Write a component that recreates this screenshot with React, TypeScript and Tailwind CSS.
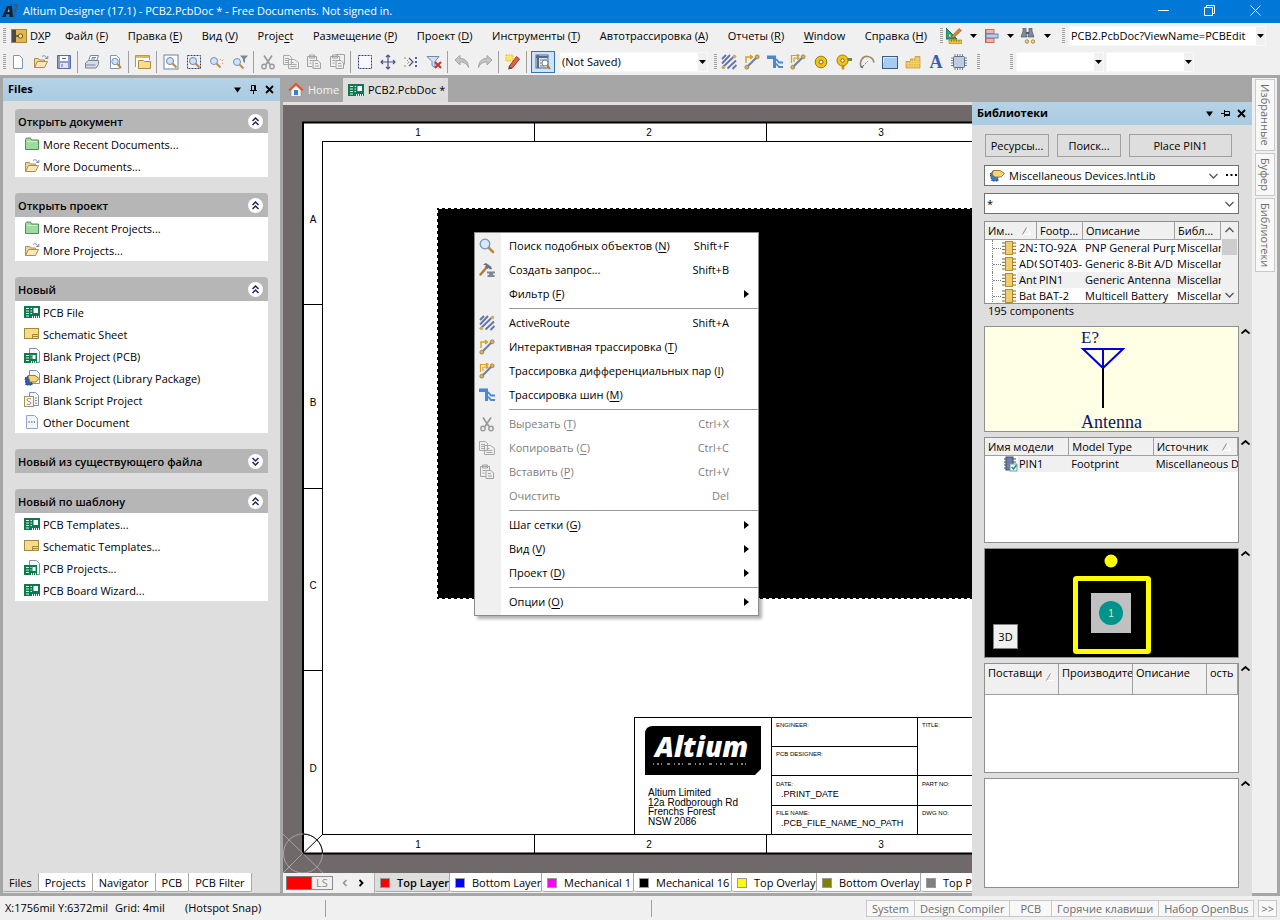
import { useState, type ReactNode } from 'react'

const sheet = <path d="M3.5 1.5h6l3 3v10h-9z" fill="#fff" stroke="#7f93b5" />
const lens = (
  <>
    <path d="M9.5 9.5l4.500 4.500" stroke="#c08a45" strokeWidth="2.600" strokeLinecap="round" />
    <circle cx="6" cy="6" r="4.800" fill="#d6e8fa" stroke="#7890b4" strokeWidth="1.300" />
  </>
)
const board = (
  <>
    <rect x="0" y="2" width="16" height="12" fill="#0c7a4e" />
    <path d="M2 4.500h3M2 7h3M2 9.500h3M2 12h3M6.500 4.500h1.500M6.500 7h1.500M6.500 9.500h1.500" stroke="#d8f5e4" />
    <rect x="9.500" y="4" width="4.500" height="5" fill="#fff" />
    <path d="M8.500 14v-2M10.500 14v-2M12.500 14v-2M14.500 14v-2" stroke="#fff" />
  </>
)
const routeEnds = (
  <>
    <path d="M3 13L13 3" stroke="#7280a8" strokeWidth="2.200" />
    <circle cx="2.800" cy="13.200" r="2" fill="#cbb060" stroke="#8a7638" strokeWidth=".6" />
    <circle cx="13.200" cy="2.800" r="2" fill="#cbb060" stroke="#8a7638" strokeWidth=".6" />
  </>
)
const clipPage = (
  <path d="M1.500 2.500h9v4M1.500 2.500v10h5M3.500 1h5v3h-5zM3.500 6.500h3M3.500 9h2M7 6.500h5l2.500 2.500v5.500H7zM9 9.500h3M9 12h4" />
)

const icons: Record<string, ReactNode> = {
  altium: (
    <>
      <path d="M0 14L5 3h5l1 11H7.500l-.3-3H4.500l-1 3z" fill="#17202e" />
      <path d="M5.500 9l1.500-4 .5 4z" fill="#8fb4dc" />
      <path d="M8 2h2M11.500 2H15l-2.500 8M12.500 12l-1 2" stroke="#4b4f5c" strokeWidth="1.500" fill="none" />
    </>
  ),
  dxp: (
    <>
      <rect x=".5" y="1.500" width="15" height="13" fill="#e2b84a" stroke="#a88532" />
      <rect x="1" y="2" width="4" height="12" fill="#4a4a4a" />
      <path d="M4 8h5" stroke="#4a4a4a" strokeWidth="1.500" />
      <circle cx="9.500" cy="8" r="2.200" fill="#f5dc90" stroke="#6a5320" />
    </>
  ),
  page: sheet,
  open: (
    <>
      <path d="M1.500 13.500v-9h4l1 1.500h5v2" fill="#f0d79b" stroke="#b08c48" />
      <path d="M1.500 13.500l3-6h10l-3 6z" fill="#fae8bc" stroke="#b08c48" />
      <path d="M9 2.500c2-1.500 4-.5 4.500 1.500M14.800 2v2.500h-2.500" fill="none" stroke="#6d83b8" />
    </>
  ),
  save: (
    <>
      <path d="M1.500 1.500h13v13h-13z" fill="#8d9ccc" stroke="#5b6ba5" />
      <rect x="4" y="2" width="8" height="5" fill="#fff" />
      <rect x="4" y="9" width="8" height="5" fill="#dfe5f4" />
      <path d="M6 4.500h4M6 10v3" stroke="#5b6ba5" />
    </>
  ),
  print: (
    <>
      <path d="M4.500 7l2-5.500h8L12.500 7" fill="#fff" stroke="#76829e" />
      <path d="M1.500 9l3-2.500h10v4l-2.500 3.500h-10.500z" fill="#d8dce6" stroke="#76829e" />
      <path d="M2 11h9.500M8 3.500h4M7 5h4" stroke="#76829e" />
    </>
  ),
  preview: (
    <>
      {sheet}
      <circle cx="8" cy="7.500" r="3.200" fill="#cfe4fa" stroke="#7890b4" />
      <path d="M10.500 10l3.500 4" stroke="#c08a45" strokeWidth="2" />
    </>
  ),
  folderWin: (
    <>
      <path d="M.5 13V1.500h14V6" fill="#fff" stroke="#b59a4c" />
      <path d="M1 3h13" stroke="#d9bb59" strokeWidth="2" />
      <path d="M3.500 14.500v-8h5l1 1h6v7z" fill="#f7dd88" stroke="#b08c38" />
    </>
  ),
  zoomDoc: (
    <>
      <rect x="1" y="1" width="14" height="14" fill="#fff" stroke="#6d83a8" />
      <circle cx="7" cy="7" r="3.500" fill="#cfe4fa" stroke="#6d83a8" />
      <path d="M9.500 9.500l4 4" stroke="#c08a45" strokeWidth="2.200" />
    </>
  ),
  zoomArea: (
    <>
      <rect x="1.500" y="1.500" width="13" height="13" fill="none" stroke="#33407a" strokeDasharray="2 1" />
      <circle cx="7" cy="7" r="3.500" fill="#cfe4fa" stroke="#6d83a8" />
      <path d="M9.500 9.500l4 4" stroke="#c08a45" strokeWidth="2.200" />
    </>
  ),
  zoomSel: (
    <>
      <circle cx="5" cy="7" r="3.500" fill="#cfe4fa" stroke="#7890b4" />
      <path d="M7.500 9.500l4 4" stroke="#c08a45" strokeWidth="2" />
      <path d="M11 5l2 2 2-2M13 9l2 1" fill="none" stroke="#d0a640" strokeDasharray="1.500 1" />
    </>
  ),
  zoomFilter: (
    <>
      <circle cx="5" cy="8" r="3.500" fill="#cfe4fa" stroke="#7890b4" />
      <path d="M7.500 10.500l4 4" stroke="#c08a45" strokeWidth="2" />
      <path d="M8 1.500h8l-3 3.500v4l-2-1.500V5z" fill="#7d8794" />
    </>
  ),
  cut: (
    <>
      <path d="M4 1.500l6 9M12 1.500l-6 9" stroke="#9a9a9a" strokeWidth="1.700" />
      <circle cx="4" cy="12.500" r="2.200" fill="none" stroke="#9a9a9a" strokeWidth="1.400" />
      <circle cx="12" cy="12.500" r="2.200" fill="none" stroke="#9a9a9a" strokeWidth="1.400" />
    </>
  ),
  copy: (
    <path
      d="M.5 1.500h6l2 2v7h-8zM2 4.500h4M2 6.500h4M2 8.500h3M5.500 5.500h6l4 3v6h-10zM7.500 8.500h3M7.500 10.500h6M7.500 12.500h6"
      fill="#efefef"
      stroke="#a8a8a8"
    />
  ),
  paste: <g fill="#efefef" stroke="#a2a2a2">{clipPage}</g>,
  pasteMany: (
    <g fill="#efefef" stroke="#a2a2a2">
      <path d="M6.500 .5h9v10" />
      {clipPage}
    </g>
  ),
  marquee: <rect x="1.500" y="1.500" width="13" height="13" fill="#f8f8ff" stroke="#33407a" strokeDasharray="2 1" />,
  move: (
    <path
      d="M8 1v14M1 8h14M6 3l2-2 2 2M6 13l2 2 2-2M3 6L1 8l2 2M13 6l2 2-2 2"
      fill="none"
      stroke="#46568a"
      strokeWidth="1.200"
    />
  ),
  deselect: (
    <>
      <path d="M1 4h3M4 6l2 2-2 2M1 12h3" fill="none" stroke="#a08c50" strokeDasharray="2 1" />
      <path d="M6 4l4 4-4 4" fill="none" stroke="#46568a" strokeWidth="1.200" />
      <path d="M12 3h2v2h-2zM12 7h2v2h-2zM12 11h2v2h-2z" fill="#56648c" />
    </>
  ),
  clearFilter: (
    <>
      <path d="M1 2.500h12L9 7.500v6l-3-2v-4z" fill="#cfe0f2" stroke="#6d8bb4" />
      <path d="M9 8l6 6M15 8l-6 6" stroke="#d03030" strokeWidth="2" />
    </>
  ),
  undo: <path d="M1 6l5-4.500v3c5 0 8 2.500 8.500 9C13 9.500 10 8 6 8v3z" fill="#c4c4c4" stroke="#a4a4a4" />,
  redo: <path d="M15 6l-5-4.500v3c-5 0-8 2.500-8.500 9C3 9.500 6 8 10 8v3z" fill="#c4c4c4" stroke="#a4a4a4" />,
  pencil: (
    <>
      <path d="M1 1h7v6H1z" fill="#ffe76a" stroke="#e0b820" strokeDasharray="1.500 1" />
      <path d="M4 12.500L11.500 2.500l3 2.500-7.500 9.500z" fill="#e0604c" stroke="#a03c30" />
      <path d="M4 12.500l-1 3 4-1z" fill="#404040" />
    </>
  ),
  inspect: (
    <>
      <rect x="1" y="1" width="12" height="13" fill="#f2e0b8" stroke="#4a6c98" />
      <path d="M1 3h12M3 1v13" stroke="#4a6c98" strokeWidth="2" />
      <path d="M5 6h7M5 9h4M5 12h4" stroke="#6d8bb4" />
      <circle cx="10" cy="9" r="3" fill="#fff" stroke="#6d83a8" />
      <path d="M12 11l3 4" stroke="#b07830" strokeWidth="2" />
    </>
  ),
  active: (
    <>
      <path d="M1 5l4-4M1 9.500L9 1M1 14L14 1.500M6.500 14.500l8.500-8M11.500 15l4-4" stroke="#6474a8" strokeWidth="1.900" />
      <circle cx="2.500" cy="13.500" r="1.800" fill="#cbb060" />
      <circle cx="13.500" cy="2.500" r="1.800" fill="#cbb060" />
    </>
  ),
  route: (
    <>
      {routeEnds}
      <path d="M2 9V3h6M6 1l2.500 2L6 5" fill="none" stroke="#d6a21c" strokeWidth="1.400" />
    </>
  ),
  diff: (
    <>
      {routeEnds}
      <path d="M1.500 9V1.500H8M4 8V4h4M7 0l2 1.500L7 3M7 2.500L9 4 7 5.500" fill="none" stroke="#d6a21c" strokeWidth="1.200" />
    </>
  ),
  bus: (
    <>
      <path d="M0 1.500h9V14H6V5H0z" fill="#4a86d4" />
      <path d="M9 5l3 3.500h4M9 9.500l3 3.500h4" fill="none" stroke="#4a86d4" strokeWidth="1.800" />
    </>
  ),
  pad: (
    <>
      <circle cx="8" cy="8" r="5.800" fill="#f2c21a" stroke="#a07c10" />
      <circle cx="8" cy="8" r="2" fill="#fff" stroke="#806410" />
    </>
  ),
  via: (
    <>
      <path d="M7 9v6.500" stroke="#d68a20" strokeWidth="2.600" />
      <path d="M10 5.500h6" stroke="#4c9a20" strokeWidth="3" />
      <circle cx="6.500" cy="6.500" r="5.500" fill="#f2c21a" stroke="#a07c10" />
      <circle cx="6.500" cy="6.500" r="1.700" fill="#fff" stroke="#806410" />
    </>
  ),
  arc: (
    <>
      <path d="M2 13C0 7 4 2 8.500 2.500c4 .5 6 3 6.500 6" fill="none" stroke="#a08a68" strokeWidth="1.700" />
      <path d="M4 12l5-5" stroke="#5b74c4" strokeDasharray="1.500 1" />
      <circle cx="3" cy="13" r="1.300" fill="#5b74c4" />
    </>
  ),
  fill: (
    <>
      <rect x=".5" y="2.500" width="15" height="12" fill="#a6cdf0" stroke="#365c88" />
      <path d="M1.500 9V3.500h13" fill="none" stroke="#dceefc" />
    </>
  ),
  polygon: (
    <>
      <path d="M1 7.500h4.500V5H10V2.500h5V14H1z" fill="#e8b93c" stroke="#c0942c" strokeWidth=".7" />
      <path d="M1 9.500h14M1 12h14M6 7.500h9M10 5h5M3.500 8v6M6 6v8M8.500 5v9M11 3v11M13 3v11" stroke="#f6dc8c" strokeWidth=".6" />
    </>
  ),
  text: (
    <text x="8" y="14" fontSize="18" fontWeight="700" textAnchor="middle" fill="#3c5cae" fontFamily="Liberation Serif, serif">
      A
    </text>
  ),
  chip: (
    <>
      <path d="M4 0v16M6.500 0v16M9 0v16M11.500 0v16M0 4h16M0 6.500h16M0 9h16M0 11.500h16" stroke="#6b7d94" strokeWidth=".9" />
      <rect x="2.500" y="2.500" width="11" height="11" rx="1" fill="#bccde0" stroke="#5f7189" />
    </>
  ),
  ruler: (
    <>
      <path d="M0 0v11h11z" fill="#33a070" stroke="#1d6f4c" />
      <path d="M3 6v2.500h2.500z" fill="#fff" />
      <path d="M5 9l8-8.500 2.500 2L8 9.500z" fill="#d8843a" stroke="#94551e" strokeWidth=".6" />
      <path d="M3 12h12.500v3.500H3z" fill="#f2c83c" stroke="#a88218" strokeWidth=".7" />
      <path d="M5.500 12v2M8 12v2M10.500 12v2M13 12v2" stroke="#8a6a10" strokeWidth=".7" />
    </>
  ),
  align: (
    <>
      <path d="M2.500 1v14" stroke="#5a6a94" />
      <rect x="3" y="1.500" width="8" height="4" fill="#f3b4ac" stroke="#d06c60" />
      <rect x="3" y="6" width="12" height="4" fill="#b4d0f0" stroke="#5c86b8" />
      <rect x="3" y="10.500" width="8" height="4" fill="#f3b4ac" stroke="#d06c60" />
    </>
  ),
  find: (
    <>
      <path d="M3 0h3v3l1 6H1l2-6zM9 0h3v3l2 6H8l1-6z" fill="#7f8a9c" stroke="#505a6c" strokeWidth=".7" />
      <path d="M6 5h3" stroke="#505a6c" strokeWidth="2" />
      <circle cx="7" cy="13.500" r="1.700" fill="#f0d890" stroke="#a88a38" />
      <circle cx="13" cy="13.500" r="1.700" fill="#f0d890" stroke="#a88a38" />
    </>
  ),
  home: (
    <>
      <path d="M3 8v6.500h10V8L8 3.500z" fill="#f6f4ee" stroke="#9a9484" strokeWidth=".7" />
      <path d="M1 8.500L8 2l7 6.500" fill="none" stroke="#dd5a2c" strokeWidth="2.200" />
      <rect x="6" y="8" width="4" height="5" fill="#2f7ee0" />
    </>
  ),
  board,
  green: (
    <>
      <path d="M1.500 13.500v-10l1-1.500h4l1 2h7v9.500z" fill="#9fdb9f" stroke="#4d8f5c" />
      <path d="M3 5.500h10" stroke="#c9f0c9" />
    </>
  ),
  schematic: (
    <>
      <rect x=".5" y="2.500" width="14" height="10" fill="#f5dc86" stroke="#a8893c" />
      <path d="M8.500 12V8.500H14M9 10.500h5" fill="none" stroke="#a8893c" />
    </>
  ),
  boardProject: (
    <>
      <path d="M5.500.5h7l3 3v11h-10z" fill="#f3f7fc" stroke="#7f93b5" />
      <rect x="0" y="5" width="13" height="10" fill="#0c7a4e" />
      <path d="M2 7.500h3M2 10h3M2 12.500h3M6.500 7.500h1M6.500 10h1" stroke="#d8f5e4" />
      <rect x="8.500" y="7" width="3" height="4" fill="#fff" />
      <path d="M7.500 15v-2M9.500 15v-2M11.500 15v-2" stroke="#fff" />
    </>
  ),
  library: (
    <>
      <path d="M5.500.5h7l3 3v10h-10z" fill="#f3f7fc" stroke="#7f93b5" />
      <path d="M1 8l3-2h4v9H2z" fill="#2c5fae" stroke="#1c3f7c" strokeDasharray="1.500 1" />
      <path d="M4 5.500h7l4 3-3 3.500H6z" fill="#f5d77a" stroke="#9a7c30" />
    </>
  ),
  script: (
    <>
      <path d="M5.500.5h6l3 3v10h-9z" fill="#f3f7fc" stroke="#7f93b5" />
      <rect x=".5" y="4.500" width="9" height="10" fill="#fbf6e4" stroke="#a39458" />
      <path d="M7 7C5 6 3 6.500 3 8s4 1.500 4 3-2.500 2-4 1M11 6h2M11 8.500h2M11 11h2" fill="none" stroke="#8b8b8b" />
    </>
  ),
  other: (
    <>
      <path d="M2.500 1.500h8l3 3v10h-11z" fill="#f3f7fc" stroke="#8fa5cc" />
      <path d="M4.500 8h7" stroke="#5b7ab0" strokeWidth="1.300" strokeDasharray="1.300 1.300" />
    </>
  ),
  intlib: (
    <>
      <path d="M1 6l3-3h5v10H3z" fill="#3f78c4" stroke="#1c4f94" strokeDasharray="1.500 1" />
      <path d="M4 2.500h7l4.500 3L12 9H6L3.500 7z" fill="#f5d77a" stroke="#9a7c30" />
    </>
  ),
  part: (
    <>
      <path d="M1 3h14M1 6.300h14M1 9.600h14M1 13h14" stroke="#7a6428" />
      <rect x="4.500" y="1.500" width="7" height="13" fill="#f0cd6c" stroke="#b08a30" />
    </>
  ),
  footprint: (
    <>
      <path d="M2 3h12M2 6h12M2 9h12M2 12h9" stroke="#3c4a68" />
      <rect x="4" y="1" width="7" height="13" fill="#6f80a4" stroke="#3c4a68" />
      <rect x="8" y="8" width="7" height="7" fill="#fff" stroke="#6c9c94" />
      <path d="M9.500 11l2 2 3-4" fill="none" stroke="#1c9484" strokeWidth="1.500" />
    </>
  ),
  lens,
  hammer: (
    <>
      <path d="M1.500 12.500L8 5" stroke="#b5763c" strokeWidth="2.400" strokeLinecap="round" />
      <path d="M4 2.500L7 1l5 3.500 1 2.500-2 .5L9.500 6 8 7 6 5l1-1.500z" fill="#6c7480" />
      <path d="M8 9.500h8v2h-2v1.500h1.500V15h-7v-2H10v-1.500H8z" fill="#7d8796" />
    </>
  ),
}

function Icon({ name }: { name: string }) {
  return (
    <svg viewBox="0 0 16 16" className="size-4 shrink-0" fill="none" aria-hidden="true">
      {icons[name]}
    </svg>
  )
}

// The letter after an underscore is the keyboard mnemonic.
function Label({ text }: { text: string }) {
  const at = text.indexOf('_')
  if (at < 0) return <>{text}</>
  return (
    <>
      {text.slice(0, at)}
      <span className="underline underline-offset-2">{text[at + 1]}</span>
      {text.slice(at + 2)}
    </>
  )
}

function Down() {
  return (
    <svg viewBox="0 0 7 4" className="w-[7px] h-1 shrink-0" aria-hidden="true">
      <path d="M0 0h7L3.500 4z" />
    </svg>
  )
}

function Grip() {
  return <span className="w-[3px] h-4 shrink-0 bg-[repeating-linear-gradient(#a0a0a0_0_1px,transparent_1px_2px)]" />
}

function Sep() {
  return <span className="w-[5px] shrink-0 flex justify-center"><span className="w-px h-[22px] bg-[#a0a0a0]" /></span>
}

function Tools({ names }: { names: string[] }) {
  return names.map((n) => (
    <button key={n} aria-label={n} className="w-[23px] h-[22px] flex items-center justify-center hover:bg-[#d5e6f5]">
      <Icon name={n} />
    </button>
  ))
}

function ToolCombo({ label, value, width }: { label: string; value: string; width: string }) {
  return (
    <div className={`${width} h-5 flex bg-white border border-[#f8f8f8]`}>
      <select aria-label={label} className="appearance-none flex-1 min-w-0 pl-px bg-white outline-none">
        <option>{value}</option>
      </select>
      <span className="w-[9px] bg-[#f0f0f0] flex items-center justify-center"><Down /></span>
    </div>
  )
}

const menus = [
  'Файл (_F)', 'Правка (_E)', 'Вид (_V)', 'Proje_ct', 'Размещение (_P)', 'Проект (_D)',
  'Инструменты (_T)', 'Автотрассировка (_A)', 'Отчеты (_R)', '_Window', 'Справка (_H)',
]

const toolGroups = [
  ['page', 'open', 'save'],
  ['print', 'preview'],
  ['folderWin'],
  ['zoomDoc', 'zoomArea', 'zoomSel', 'zoomFilter'],
  ['cut', 'copy', 'paste', 'pasteMany'],
  ['marquee', 'move', 'deselect', 'clearFilter'],
  ['undo', 'redo'],
  ['pencil'],
]

const placeTools = ['active', 'route', 'bus', 'diff', 'pad', 'via', 'arc', 'fill', 'polygon', 'text', 'chip']

const groups: { title: string; closed?: boolean; items: [string, string][] }[] = [
  { title: 'Открыть документ', items: [['green', 'More Recent Documents...'], ['open', 'More Documents...']] },
  { title: 'Открыть проект', items: [['green', 'More Recent Projects...'], ['open', 'More Projects...']] },
  {
    title: 'Новый',
    items: [
      ['board', 'PCB File'],
      ['schematic', 'Schematic Sheet'],
      ['boardProject', 'Blank Project (PCB)'],
      ['library', 'Blank Project (Library Package)'],
      ['script', 'Blank Script Project'],
      ['other', 'Other Document'],
    ],
  },
  { title: 'Новый из существующего файла', closed: true, items: [] },
  {
    title: 'Новый по шаблону',
    items: [
      ['board', 'PCB Templates...'],
      ['schematic', 'Schematic Templates...'],
      ['boardProject', 'PCB Projects...'],
      ['board', 'PCB Board Wizard...'],
    ],
  },
]

type Entry = { label: string; icon?: string; keys?: string; sub?: boolean; off?: boolean }

const contextMenu: Entry[][] = [
  [
    { label: 'Поиск подобных объектов (_N)', icon: 'lens', keys: 'Shift+F' },
    { label: 'Создать запрос...', icon: 'hammer', keys: 'Shift+B' },
    { label: 'Фильтр (_F)', sub: true },
  ],
  [
    { label: 'ActiveRoute', icon: 'active', keys: 'Shift+A' },
    { label: 'Интерактивная трассировка (_T)', icon: 'route' },
    { label: 'Трассировка дифференциальных пар (_I)', icon: 'diff' },
    { label: 'Трассировка шин (_M)', icon: 'bus' },
  ],
  [
    { label: 'Вырезать (_T)', icon: 'cut', keys: 'Ctrl+X', off: true },
    { label: 'Копировать (_C)', icon: 'copy', keys: 'Ctrl+C', off: true },
    { label: 'Вставить (_P)', icon: 'paste', keys: 'Ctrl+V', off: true },
    { label: 'Очистить', keys: 'Del', off: true },
  ],
  [
    { label: 'Шаг сетки (_G)', sub: true },
    { label: 'Вид (_V)', sub: true },
    { label: 'Проект (_D)', sub: true },
  ],
  [{ label: 'Опции (_O)', sub: true }],
]

const layers = [
  { name: 'Top Layer', color: 'bg-[#ff0000]', width: 'w-[75px]' },
  { name: 'Bottom Layer', color: 'bg-[#0000ff]', width: 'w-[92px]' },
  { name: 'Mechanical 1', color: 'bg-[#ff00ff]', width: 'w-[92px]' },
  { name: 'Mechanical 16', color: 'bg-black', width: 'w-[98px]' },
  { name: 'Top Overlay', color: 'bg-[#ffff00]', width: 'w-[85px]' },
  { name: 'Bottom Overlay', color: 'bg-[#808000]', width: 'w-[104px]' },
  { name: 'Top Paste', color: 'bg-[#808080]', width: 'w-[84px]' },
]

function TitleBar() {
  return (
    <header className="h-[23px] shrink-0 flex items-center bg-[#0078d7] text-white pl-[2px] pb-[2px]">
      <Icon name="altium" />
      <h1 className="pl-[5px] flex-1">Altium Designer (17.1) - PCB2.PcbDoc * - Free Documents. Not signed in.</h1>
      <div className="flex pr-[2px]">
        <button aria-label="Minimize" className="w-[46px] h-[21px] flex items-center justify-center">
          <svg viewBox="0 0 11 11" className="size-[11px]" fill="none" stroke="#fff"><path d="M0 5.500h11" /></svg>
        </button>
        <button aria-label="Restore" className="w-[46px] h-[21px] flex items-center justify-center">
          <svg viewBox="0 0 11 11" className="size-[11px]" fill="none" stroke="#fff"><path d="M.5 2.500h8v8h-8zM2.500 2.500v-2h8v8h-2" /></svg>
        </button>
        <button aria-label="Close" className="w-[46px] h-[21px] flex items-center justify-center">
          <svg viewBox="0 0 11 11" className="size-[11px]" fill="none" stroke="#fff"><path d="M.5.5l10 10M10.500.5l-10 10" /></svg>
        </button>
      </div>
    </header>
  )
}

function MenuBar() {
  return (
    <div className="h-[26px] shrink-0 flex items-center pl-[3px]">
      <Grip />
      <span className="pl-[5px] pr-[3px]"><Icon name="dxp" /></span>
      <nav className="flex whitespace-nowrap">
        <button className="w-[35px] text-left"><Label text="D_XP" /></button>
        <div className="w-[862px] flex justify-between">
          {menus.map((m) => (
            <button key={m}><Label text={m} /></button>
          ))}
        </div>
      </nav>
      <span className="w-[13px]" />
      <Grip />
      {['ruler', 'align', 'find'].map((n) => (
        <button key={n} aria-label={n} className="w-[37px] pl-[3px] flex items-center gap-2">
          <Icon name={n} />
          <Down />
        </button>
      ))}
      <span className="w-2" />
      <Grip />
      <span className="w-1" />
      <ToolCombo label="Address" value="PCB2.PcbDoc?ViewName=PCBEdit" width="w-[197px]" />
    </div>
  )
}

function ToolBar() {
  return (
    <div className="h-[26px] shrink-0 flex items-center pl-[3px]">
      <Grip />
      {toolGroups.map((g) => (
        <div key={g[0]} className="flex items-center">
          <Tools names={g} />
          <Sep />
        </div>
      ))}
      <button aria-label="inspect" className="w-6 h-[22px] mx-[2px] flex items-center justify-center bg-[#cfe3f5] border border-[#2f76b8]">
        <Icon name="inspect" />
      </button>
      <span className="w-[3px]" />
      <ToolCombo label="Filter" value="(Not Saved)" width="w-[148px]" />
      <span className="w-[6px]" />
      <Grip />
      <Tools names={placeTools} />
      <span className="w-[7px]" />
      <Grip />
      <span className="w-[30px]" />
      <Grip />
      <span className="w-[3px]" />
      <ToolCombo label="Variant" value="" width="w-[88px]" />
      <span className="w-[2px]" />
      <ToolCombo label="View state" value="" width="w-[88px]" />
    </div>
  )
}

function PanelTitle({ title, pinned }: { title: string; pinned?: boolean }) {
  return (
    <div className="h-[23px] shrink-0 flex items-center bg-linear-to-b from-[#b6d2e6] to-[#a9cbe1] pl-[5px] pr-[6px] pb-[2px]">
      <h2 className="flex-1 font-bold">{title}</h2>
      <div className="flex items-center gap-[7px] pt-px">
        <button aria-label={`${title} menu`}>
          <svg viewBox="0 0 9 9" className="size-[9px]"><path d="M1 2.500h7l-3.500 5z" /></svg>
        </button>
        <button aria-label={`Pin ${title}`}>
          <svg viewBox="0 0 9 9" className={pinned ? 'size-[9px] rotate-90' : 'size-[9px]'} fill="none" stroke="#000">
            <path d="M2.500.5h4v5h-4zM1 5.500h7M4.500 6v3M5.500 1v4" />
          </svg>
        </button>
        <button aria-label={`Close ${title}`}>
          <svg viewBox="0 0 9 9" className="size-[9px]" stroke="#000" strokeWidth="1.800"><path d="M1 1l7 7M8 1L1 8" /></svg>
        </button>
      </div>
    </div>
  )
}

function FilesPanel() {
  return (
    <aside className="w-[277px] shrink-0 flex flex-col bg-[#dedede]">
      <PanelTitle title="Files" />
      <div className="flex-1 flex flex-col gap-4 px-3 pt-2">
        {groups.map((g) => (
          <section key={g.title} className="bg-white rounded-t-[3px]">
            <h3 className="h-6 flex items-center justify-between bg-[#b6b6b6] rounded-t-[3px] pl-[3px] pr-[5px] font-semibold">
              <span className="pt-[2px]">{g.title}</span>
              <button aria-label={g.title} className="size-[15px] rounded-full bg-white flex items-center justify-center">
                <svg viewBox="0 0 9 9" className={g.closed ? 'size-[9px] rotate-180' : 'size-[9px]'} fill="none" stroke="#1f2c50" strokeWidth="1.500">
                  <path d="M1.500 4l3-3 3 3M1.500 8l3-3 3 3" />
                </svg>
              </button>
            </h3>
            <ul>
              {g.items.map(([icon, text]) => (
                <li key={text} className="h-[22px] pl-[9px] flex items-center">
                  <a href="#" className="flex items-center gap-[3px]"><Icon name={icon} /><span className="pt-[2px]">{text}</span></a>
                </li>
              ))}
            </ul>
          </section>
        ))}
      </div>
      <div className="h-[20px] flex">
        {['Files', 'Projects', 'Navigator', 'PCB', 'PCB Filter'].map((t, i) => (
          <button
            key={t}
            className={`h-[19px] px-[6px] pt-px border-r border-b border-[#a8a8a8] rounded-b-[2px] ${i === 0 ? '' : 'bg-white'}`}
          >
            {t}
          </button>
        ))}
      </div>
    </aside>
  )
}

function Sheet() {
  return (
    <svg
      viewBox="283 105 689 768"
      preserveAspectRatio="xMinYMin slice"
      className="w-full h-full block"
      fill="none"
      fontFamily="Liberation Sans, sans-serif"
    >
      <rect x="303" y="122" width="700" height="732" fill="#fff" />
      <path d="M1000 122.500H303V853.500H1000" stroke="#000" strokeWidth="2" />
      <g stroke="#000" shapeRendering="crispEdges">
        <path d="M1000 141.500H322.500V834.500H1000" />
        <path d="M534.500 122v19M766.500 122v19M534.500 834v19M766.500 834v19" />
        <path d="M303 304.500h19M303 488.500h19M303 670.500h19" />
        <path d="M634.500 834V717.500H1000M771.500 717v117M917.500 717v117M771 746.500h146M771 775.500h229M771 805.500h229" />
      </g>
      <g fill="#000" fontSize="10" textAnchor="middle">
        <text x="418" y="136">1</text>
        <text x="649" y="136">2</text>
        <text x="881" y="136">3</text>
        <text x="418" y="848">1</text>
        <text x="649" y="848">2</text>
        <text x="881" y="848">3</text>
        <text x="313" y="223">A</text>
        <text x="313" y="406">B</text>
        <text x="313" y="589">C</text>
        <text x="313" y="772">D</text>
      </g>
      <rect x="437" y="208" width="600" height="391" fill="#000" />
      <path d="M1000 208.500H437.500V598.500H1000" stroke="#fff" strokeDasharray="3 3" shapeRendering="crispEdges" />
      <path d="M653 726h108v43l-6 6H645v-41q0-8 8-8z" fill="#000" />
      <text x="655" y="757" fontSize="28" fontWeight="800" fontStyle="italic" fill="#fff" fontFamily="Open Sans, sans-serif">
        Altium
      </text>
      <path d="M653 764h94" stroke="#fff" strokeDasharray="1 3 2 2 1 5 3 4" />
      <g fill="#000" fontSize="10">
        <text x="648" y="796">Altium Limited</text>
        <text x="648" y="806">12a Rodborough Rd</text>
        <text x="648" y="815">Frenchs Forest</text>
        <text x="648" y="825">NSW 2086</text>
      </g>
      <g fill="#000" fontSize="9">
        <text x="781" y="797">.PRINT_DATE</text>
        <text x="781" y="826">.PCB_FILE_NAME_NO_PATH</text>
      </g>
      <g fill="#000" fontSize="6">
        <text x="776" y="727">ENGINEER:</text>
        <text x="776" y="756">PCB DESIGNER:</text>
        <text x="776" y="786">DATE:</text>
        <text x="776" y="815">FILE NAME:</text>
        <text x="922" y="727">TITLE:</text>
        <text x="922" y="786">PART NO:</text>
        <text x="922" y="815">DWG NO:</text>
      </g>
      <circle cx="303" cy="853.500" r="19.500" stroke="#a8a4a3" />
      <path d="M283 834l40 39M283 873l20-20" stroke="#a8a4a3" />
      <path d="M303 853.500l20-19.500M303 834a19.500 19.500 0 0 1 19.500 19.500" stroke="#000" />
    </svg>
  )
}

function ContextMenu() {
  return (
    <div
      role="menu"
      className="absolute left-[191px] top-[127px] w-[285px] py-px border border-[#8c8c8c] shadow-[3px_3px_3px_rgba(0,0,0,0.3)] bg-[linear-gradient(90deg,#f0f0f0_26px,#fff_26px)]"
    >
      {contextMenu.map((section, i) => (
        <div key={i}>
          {i > 0 && <div className="h-[5px] pl-[34px] pt-[2px]"><div className="h-px bg-[#9a9a9a]" /></div>}
          {section.map((e) => (
            <button
              key={e.label}
              role="menuitem"
              disabled={e.off}
              className={`w-full h-6 pl-1 pr-[9px] flex items-center text-left whitespace-nowrap ${e.off ? 'text-[#808080]' : 'text-black'}`}
            >
              <span className="w-[30px] shrink-0">{e.icon && <Icon name={e.icon} />}</span>
              <span className="flex-1"><Label text={e.label} /></span>
              <span>{e.keys}</span>
              <span className="w-5 shrink-0 flex justify-end">
                {e.sub && <svg viewBox="0 0 5 8" className="w-[5px] h-2"><path d="M0 0l5 4-5 4z" /></svg>}
              </span>
            </button>
          ))}
        </div>
      ))}
    </div>
  )
}

function LayerTabs() {
  const [active, setActive] = useState('Top Layer')
  return (
    <div className="h-5 shrink-0 flex items-start bg-[#f0f0f0] overflow-hidden whitespace-nowrap">
      <div className="w-[92px] h-5 shrink-0 flex items-center pl-[3px] border-r border-[#b0b0b0]">
        <span className="w-[26px] h-[14px] bg-[#ff0000] border border-[#7c7c7c]" />
        <button className="w-[21px] h-[14px] leading-3 border border-l-0 border-[#8c8c8c] text-[#8c8c8c]">LS</button>
        <button aria-label="Previous layer" className="pl-[9px]">
          <svg viewBox="0 0 5 8" className="w-[5px] h-2" fill="none" stroke="#909090" strokeWidth="1.500"><path d="M4.500 1l-3 3 3 3" /></svg>
        </button>
        <button aria-label="Next layer" className="pl-3">
          <svg viewBox="0 0 5 8" className="w-[5px] h-2" fill="none" stroke="#000" strokeWidth="1.800"><path d="M.5 1l3 3-3 3" /></svg>
        </button>
      </div>
      {layers.map((l) => (
        <button
          key={l.name}
          onClick={() => setActive(l.name)}
          className={`${l.width} h-[19px] pt-px shrink-0 pl-[5px] flex items-center gap-[7px] border-r border-b border-[#a8a8a8] rounded-b-[2px] ${
            l.name === active ? 'bg-[#dedede] font-semibold' : 'bg-white'
          }`}
        >
          <span className={`size-[10px] shrink-0 border border-[#9a9a9a] ${l.color}`} />
          {l.name}
        </button>
      ))}
    </div>
  )
}

function Fold({ children }: { children: ReactNode }) {
  return (
    <div className="flex items-start">
      <div className="flex-1 min-w-0">{children}</div>
      <button aria-label="Collapse" className="w-[13px] flex justify-center pt-[3px]">
        <svg viewBox="0 0 9 5" className="w-[9px] h-[5px]" fill="none" stroke="#000" strokeWidth="1.800"><path d="M.5 4.500l4-3.500 4 3.500" /></svg>
      </button>
    </div>
  )
}

function Chevron({ up }: { up?: boolean }) {
  return (
    <svg viewBox="0 0 9 6" className={up ? 'w-[9px] h-[6px] rotate-180' : 'w-[9px] h-[6px]'} fill="none" stroke="#555" strokeWidth="1.300">
      <path d="M.5 1l4 4 4-4" />
    </svg>
  )
}

function SortMark() {
  return (
    <svg viewBox="0 0 9 8" className="w-[9px] h-2 shrink-0" fill="none">
      <path d="M5 .5l3.500 7H.5" stroke="#fff" />
      <path d="M.5 7.500L4.500.5" stroke="#8a8a8a" />
    </svg>
  )
}

const parts = [
  ['2N3', 'TO-92A', 'PNP General Purp', 'Miscellar'],
  ['ADC', 'SOT403-', 'Generic 8-Bit A/D', 'Miscellar'],
  ['Ant', 'PIN1', 'Generic Antenna', 'Miscellar'],
  ['Bat', 'BAT-2', 'Multicell Battery', 'Miscellar'],
]

const th = 'text-left font-normal pl-[3px] pr-0 overflow-hidden border-r border-[#a0a0a0]'

function LibrariesPanel() {
  const [mask, setMask] = useState('*')
  return (
    <aside className="w-[280px] shrink-0 flex flex-col bg-[#dedede] whitespace-nowrap">
      <PanelTitle title="Библиотеки" pinned />
      <div className="pl-3 pt-[9px] flex flex-col">
        <div className="flex gap-2 pl-px pr-5">
          <button className="w-16 h-[23px] pt-px border border-[#a0a0a0]">Ресурсы...</button>
          <button className="w-16 h-[23px] pt-px border border-[#a0a0a0]">Поиск...</button>
          <button className="flex-1 h-[23px] pt-px border border-[#a0a0a0]">Place PIN1</button>
        </div>
        <div className="mt-2 mr-[13px] h-[21px] flex items-center bg-white border border-[#707070] pl-1 pr-px">
          <Icon name="intlib" />
          <select aria-label="Library" className="appearance-none flex-1 min-w-0 pl-1 outline-none">
            <option>Miscellaneous Devices.IntLib</option>
          </select>
          <Chevron />
          <button aria-label="Browse" className="pl-2">
            <svg viewBox="0 0 11 3" className="w-[11px] h-[3px]"><path d="M0 0h2v2H0zM4.500 0h2v2h-2zM9 0h2v2H9z" /></svg>
          </button>
        </div>
        <div className="mt-[7px] mr-[13px] h-[21px] flex items-center bg-white border border-[#707070] pl-[2px] pr-1">
          <input aria-label="Mask" value={mask} onChange={(e) => setMask(e.target.value)} className="flex-1 min-w-0 outline-none" />
          <Chevron />
        </div>
        <div className="mt-[7px] mr-[13px] h-[83px] flex bg-white border border-[#909090] overflow-hidden">
          <table className="flex-1 table-fixed border-separate border-spacing-0 w-[236px]">
            <colgroup>
              <col className="w-[52px]" />
              <col className="w-[46px]" />
              <col className="w-[92px]" />
              <col className="w-[46px]" />
            </colgroup>
            <thead className="bg-[#f0f0f0]">
              <tr className="h-[18px]">
                <th className={`${th} border-b`}><span className="flex items-center gap-[9px]">Им... <SortMark /></span></th>
                <th className={`${th} border-b`}>Footp...</th>
                <th className={`${th} border-b`}>Описание</th>
                <th className={`${th} border-b`}>Библ...</th>
              </tr>
            </thead>
            <tbody>
              {parts.map((p, i) => (
                <tr key={p[0]} className="h-4 leading-4">
                  <td className="p-0 overflow-hidden">
                    <span className="flex items-center pl-[7px]">
                      <span className="w-[9px] h-4 border-l border-dotted border-[#808080] flex items-center shrink-0">
                        <span className="flex-1 border-t border-dotted border-[#808080]" />
                      </span>
                      <Icon name="part" />
                      <span className={`flex-1 min-w-0 overflow-hidden pl-[2px] ${i === 2 ? 'bg-[#f0f0f0]' : ''}`}>{p[0]}</span>
                    </span>
                  </td>
                  {p.slice(1).map((c) => (
                    <td key={c} className={`p-0 pl-[2px] overflow-hidden ${i === 2 ? 'bg-[#f0f0f0]' : ''}`}>{c}</td>
                  ))}
                </tr>
              ))}
            </tbody>
          </table>
          <div className="w-[17px] shrink-0 flex flex-col items-center bg-[#f0f0f0] py-[5px]">
            <Chevron up />
            <span className="w-[15px] h-4 mt-[6px] bg-[#cdcdcd]" />
            <span className="flex-1" />
            <Chevron />
          </div>
        </div>
        <p className="h-[22px] pl-1 leading-[14px]">195 components</p>
        <div className="flex flex-col gap-[5px]">
          <Fold>
            <div className="h-[106px] bg-[#ffffe6] border border-[#909090] flex justify-center pr-[2px]">
              <svg viewBox="0 0 120 104" className="w-[120px] h-[104px]" fill="none" fontFamily="Liberation Serif, serif">
                <text x="30" y="16" fontSize="17" fill="#10106c">E?</text>
                <path d="M32 22h40L52 41zM52 22v19" stroke="#0000d8" strokeWidth="2" />
                <path d="M52 41v40" stroke="#000" strokeWidth="2" />
                <text x="30" y="101" fontSize="18" fill="#10106c">Antenna</text>
              </svg>
            </div>
          </Fold>
          <Fold>
            <div className="h-[106px] bg-white border border-[#909090] overflow-hidden">
              <table className="w-full table-fixed border-separate border-spacing-0">
                <thead className="bg-[#f0f0f0]">
                  <tr className="h-[18px]">
                    <th className={`${th} border-b`}>Имя модели</th>
                    <th className={`${th} border-b`}>Model Type</th>
                    <th className={`${th} border-b`}><span className="flex items-center gap-[14px]">Источник <SortMark /></span></th>
                  </tr>
                </thead>
                <tbody>
                  <tr className="leading-4">
                    <td className="p-0"><span className="flex items-center pl-[17px]"><Icon name="footprint" /><span className="flex-1 pl-px bg-[#f0f0f0]">PIN1</span></span></td>
                    <td className="p-0 pl-[2px] bg-[#f0f0f0]">Footprint</td>
                    <td className="p-0 pl-[2px] bg-[#f0f0f0] overflow-hidden">Miscellaneous D</td>
                  </tr>
                </tbody>
              </table>
            </div>
          </Fold>
          <Fold>
            <div className="h-[110px] bg-black border border-[#909090] relative flex justify-center pr-[2px]">
              <svg viewBox="0 0 80 108" className="w-[80px] h-[108px]" fill="none">
                <circle cx="40" cy="12" r="6.500" fill="#ff0" />
                <rect x="4.500" y="29.500" width="73" height="73" rx="1" stroke="#ff0" strokeWidth="5" />
                <rect x="20" y="44" width="40" height="40" fill="#c0c0c0" />
                <circle cx="40" cy="64" r="12" fill="#00928c" />
                <text x="40" y="68" fontSize="10" textAnchor="middle" fill="#e8e89c" fontFamily="Liberation Sans, sans-serif">1</text>
              </svg>
              <button className="absolute left-2 bottom-2 size-[25px] bg-[#f0f0f0] border border-[#808080]">3D</button>
            </div>
          </Fold>
          <Fold>
            <div className="h-[110px] bg-white border border-[#909090] overflow-hidden">
              <table className="w-full table-fixed border-separate border-spacing-0">
                <colgroup>
                  <col className="w-[74px]" />
                  <col className="w-[74px]" />
                  <col className="w-[74px]" />
                  <col />
                </colgroup>
                <thead className="bg-[#f0f0f0] align-top">
                  <tr className="h-[31px]">
                    <th className={`${th} pt-px border-b`}><span className="flex items-end gap-1">Поставщи <SortMark /></span></th>
                    <th className={`${th} pt-px border-b`}>Производите</th>
                    <th className={`${th} pt-px border-b`}>Описание</th>
                    <th className={`${th} pt-px border-b`}>ость</th>
                  </tr>
                </thead>
              </table>
            </div>
          </Fold>
          <Fold>
            <div className="h-[110px] bg-white border border-[#909090]" />
          </Fold>
        </div>
      </div>
    </aside>
  )
}

function StatusBar() {
  return (
    <footer className="h-6 shrink-0 flex items-center bg-[#f0f0f0] whitespace-nowrap">
      <div className="w-[326px] h-[17px] flex items-center pl-[5px] gap-3 border-r border-[#a0a0a0]">
        <span className="w-[98px]">X:1756mil Y:6372mil</span>
        <span className="w-[58px]">Grid: 4mil</span>
        <span>(Hotspot Snap)</span>
      </div>
      <div className="w-[326px] h-[17px] border-r border-[#a0a0a0]" />
      <div className="flex-1 flex justify-end text-[#6c6c6c] pr-[3px]">
        {['System', 'Design Compiler', 'PCB', 'Горячие клавиши', 'Набор OpenBus'].map((t) => (
          <button key={t} className={`h-[17px] leading-[15px] border border-l-0 first:border-l border-[#c8c8c8] bg-[#f8f8f8] ${t === 'PCB' ? 'px-[10px]' : 'px-[5px]'}`}>
            {t}
          </button>
        ))}
        <button className="h-[17px] leading-[15px] ml-1 px-[2px] border border-[#c8c8c8] bg-[#f8f8f8]">&gt;&gt;</button>
      </div>
    </footer>
  )
}

export default function App() {
  return (
    <div className="h-screen flex flex-col overflow-hidden bg-[#f0f0f0] text-black text-[11px] leading-4 font-['Open_Sans','Noto_Sans',sans-serif]">
      <TitleBar />
      <MenuBar />
      <ToolBar />
      <main className="flex-1 min-h-0 flex bg-[#a6a6a6] pl-[3px] pr-[3px] pt-[3px]">
        <div className="flex pb-[3px]"><FilesPanel /></div>
        <div className="w-[3px] shrink-0" />
        <div className="flex-1 min-w-0 flex flex-col">
          <div className="h-6 shrink-0 flex">
            <button className="w-[60px] flex items-center gap-1 pl-[5px] text-[#f4f4f4]"><Icon name="home" />Home</button>
            <button className="w-[105px] flex items-center gap-1 pl-[5px] bg-[#dedede] whitespace-nowrap"><Icon name="board" />PCB2.PcbDoc *</button>
          </div>
          <div className="flex-1 min-h-0 flex">
            <div className="flex-1 min-w-0 flex flex-col border-t-3 border-[#e4e0e0]">
              <div className="flex-1 min-h-0 relative bg-[#6f6a69]">
                <Sheet />
                <ContextMenu />
              </div>
              <LayerTabs />
              <div className="h-[3px] bg-[#a6a6a6]" />
            </div>
            <LibrariesPanel />
          </div>
        </div>
        <div className="flex pb-[3px]">
          <div className="w-[25px] bg-[#f0f0f0] flex flex-col items-center gap-[2px] pt-px text-[#6c6c6c]">
            {['Избранные', 'Буфер', 'Библиотеки'].map((t) => (
              <button key={t} className="w-5 pt-1 pb-1 flex items-center justify-center border border-[#c8c8c8] bg-[#f8f8f8] [writing-mode:vertical-rl]">
                {t}
              </button>
            ))}
          </div>
        </div>
      </main>
      <StatusBar />
    </div>
  )
}
